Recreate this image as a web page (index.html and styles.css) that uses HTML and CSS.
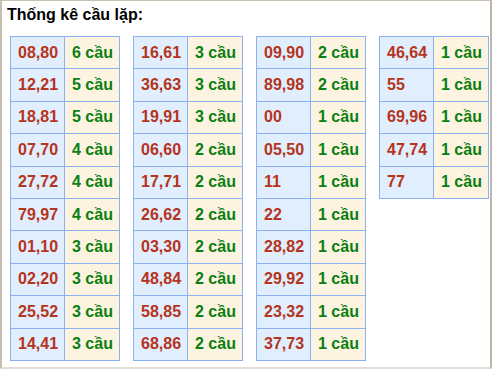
FILE: index.html
```html
<!DOCTYPE html>
<html lang="vi">
<head>
<meta charset="utf-8">
<title>Thống kê cầu lặp</title>
<link rel="stylesheet" href="styles.css">
</head>
<body>
<div class="frame">
  <div class="title">Thống kê cầu lặp:</div>
  <div class="tables">
    <div class="tbl">
      <div class="num">08,80</div><div class="cnt">6 cầu</div>
      <div class="num">12,21</div><div class="cnt">5 cầu</div>
      <div class="num">18,81</div><div class="cnt">5 cầu</div>
      <div class="num">07,70</div><div class="cnt">4 cầu</div>
      <div class="num">27,72</div><div class="cnt">4 cầu</div>
      <div class="num">79,97</div><div class="cnt">4 cầu</div>
      <div class="num">01,10</div><div class="cnt">3 cầu</div>
      <div class="num">02,20</div><div class="cnt">3 cầu</div>
      <div class="num">25,52</div><div class="cnt">3 cầu</div>
      <div class="num">14,41</div><div class="cnt">3 cầu</div>
    </div>
    <div class="tbl">
      <div class="num">16,61</div><div class="cnt">3 cầu</div>
      <div class="num">36,63</div><div class="cnt">3 cầu</div>
      <div class="num">19,91</div><div class="cnt">3 cầu</div>
      <div class="num">06,60</div><div class="cnt">2 cầu</div>
      <div class="num">17,71</div><div class="cnt">2 cầu</div>
      <div class="num">26,62</div><div class="cnt">2 cầu</div>
      <div class="num">03,30</div><div class="cnt">2 cầu</div>
      <div class="num">48,84</div><div class="cnt">2 cầu</div>
      <div class="num">58,85</div><div class="cnt">2 cầu</div>
      <div class="num">68,86</div><div class="cnt">2 cầu</div>
    </div>
    <div class="tbl">
      <div class="num">09,90</div><div class="cnt">2 cầu</div>
      <div class="num">89,98</div><div class="cnt">2 cầu</div>
      <div class="num">00</div><div class="cnt">1 cầu</div>
      <div class="num">05,50</div><div class="cnt">1 cầu</div>
      <div class="num">11</div><div class="cnt">1 cầu</div>
      <div class="num">22</div><div class="cnt">1 cầu</div>
      <div class="num">28,82</div><div class="cnt">1 cầu</div>
      <div class="num">29,92</div><div class="cnt">1 cầu</div>
      <div class="num">23,32</div><div class="cnt">1 cầu</div>
      <div class="num">37,73</div><div class="cnt">1 cầu</div>
    </div>
    <div class="tbl">
      <div class="num">46,64</div><div class="cnt">1 cầu</div>
      <div class="num">55</div><div class="cnt">1 cầu</div>
      <div class="num">69,96</div><div class="cnt">1 cầu</div>
      <div class="num">47,74</div><div class="cnt">1 cầu</div>
      <div class="num">77</div><div class="cnt">1 cầu</div>
    </div>
  </div>
</div>
</body>
</html>
```

FILE: styles.css
```css
html, body {
  margin: 0;
  padding: 0;
  background: #ffffff;
}

body {
  font-family: "Liberation Sans", Arial, sans-serif;
}

.frame {
  box-sizing: border-box;
  width: 492px;
  height: 369px;
  border-left: 2px solid #c6bfb2;
  border-top: 1px solid #c6bfb2;
  border-right: 2px solid #bdb5a8;
  border-bottom: 2px solid #e2ddd5;
  background: #ffffff;
  overflow: hidden;
}

.title {
  font-size: 16px;
  font-weight: bold;
  color: #000000;
  line-height: 18px;
  padding: 5px 0 0 5px;
}

.tables {
  display: flex;
  align-items: flex-start;
  gap: 13px;
  padding: 12px 0 0 8px;
}

.tbl {
  display: grid;
  grid-template-columns: 54px 55px;
  grid-auto-rows: 32.4px;
  border-left: 1px solid #8cb1f0;
  border-top: 1px solid #8cb1f0;
}

.num,
.cnt {
  display: flex;
  align-items: center;
  padding-left: 7px;
  font-size: 16px;
  font-weight: bold;
  border-right: 1px solid #8cb1f0;
  border-bottom: 1px solid #8cb1f0;
}

.num {
  background: #e1eefe;
  color: #b5341b;
}

.cnt {
  background: #fdf3e1;
  color: #0a7f12;
}
```
